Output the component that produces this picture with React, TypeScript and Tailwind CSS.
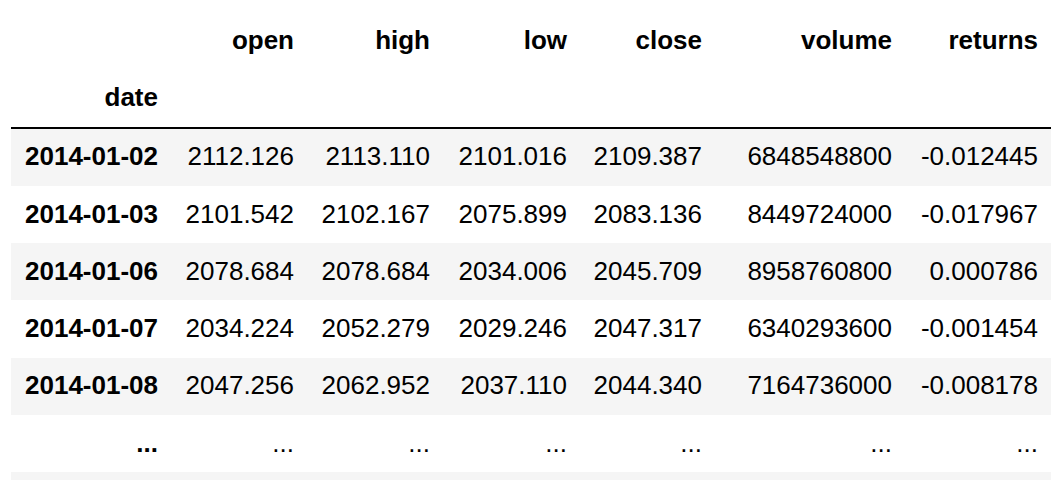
const columns = ["open", "high", "low", "close", "volume", "returns"];

const rows: [string, string[]][] = [
  ["2014-01-02", ["2112.126", "2113.110", "2101.016", "2109.387", "6848548800", "-0.012445"]],
  ["2014-01-03", ["2101.542", "2102.167", "2075.899", "2083.136", "8449724000", "-0.017967"]],
  ["2014-01-06", ["2078.684", "2078.684", "2034.006", "2045.709", "8958760800", "0.000786"]],
  ["2014-01-07", ["2034.224", "2052.279", "2029.246", "2047.317", "6340293600", "-0.001454"]],
  ["2014-01-08", ["2047.256", "2062.952", "2037.110", "2044.340", "7164736000", "-0.008178"]],
  ["...", ["...", "...", "...", "...", "...", "..."]],
  ["", ["", "", "", "", "", ""]],
];

const cell = "px-[13px] py-[13.7px] text-right align-middle leading-[29.9px] whitespace-nowrap";

export default function App() {
  return (
    <div className="h-[480px] w-[1064px] overflow-hidden bg-white font-['Liberation_Sans',Arial,sans-serif] text-[26px] text-black">
      <table className="ml-[11px] mt-[12px] table-fixed border-separate border-spacing-0">
        <colgroup>
          <col className="w-[160px]" />
          <col className="w-[136px]" />
          <col className="w-[136px]" />
          <col className="w-[137px]" />
          <col className="w-[135px]" />
          <col className="w-[190px]" />
          <col className="w-[146px]" />
        </colgroup>
        <thead>
          <tr>
            <th className={cell}></th>
            {columns.map((c) => (
              <th key={c} className={`${cell} font-bold`}>
                {c}
              </th>
            ))}
          </tr>
          <tr>
            <th className={`${cell} border-b-2 border-black font-bold`}>date</th>
            {columns.map((c) => (
              <th key={c} className={`${cell} border-b-2 border-black`}></th>
            ))}
          </tr>
        </thead>
        <tbody>
          {rows.map(([idx, vals], i) => (
            <tr key={i} className={i % 2 === 0 ? "bg-[#f5f5f5]" : "bg-white"}>
              <th className={`${cell} font-bold`}>{idx || "\u00a0"}</th>
              {vals.map((v, j) => (
                <td key={j} className={cell}>
                  {v}
                </td>
              ))}
            </tr>
          ))}
        </tbody>
      </table>
    </div>
  );
}
